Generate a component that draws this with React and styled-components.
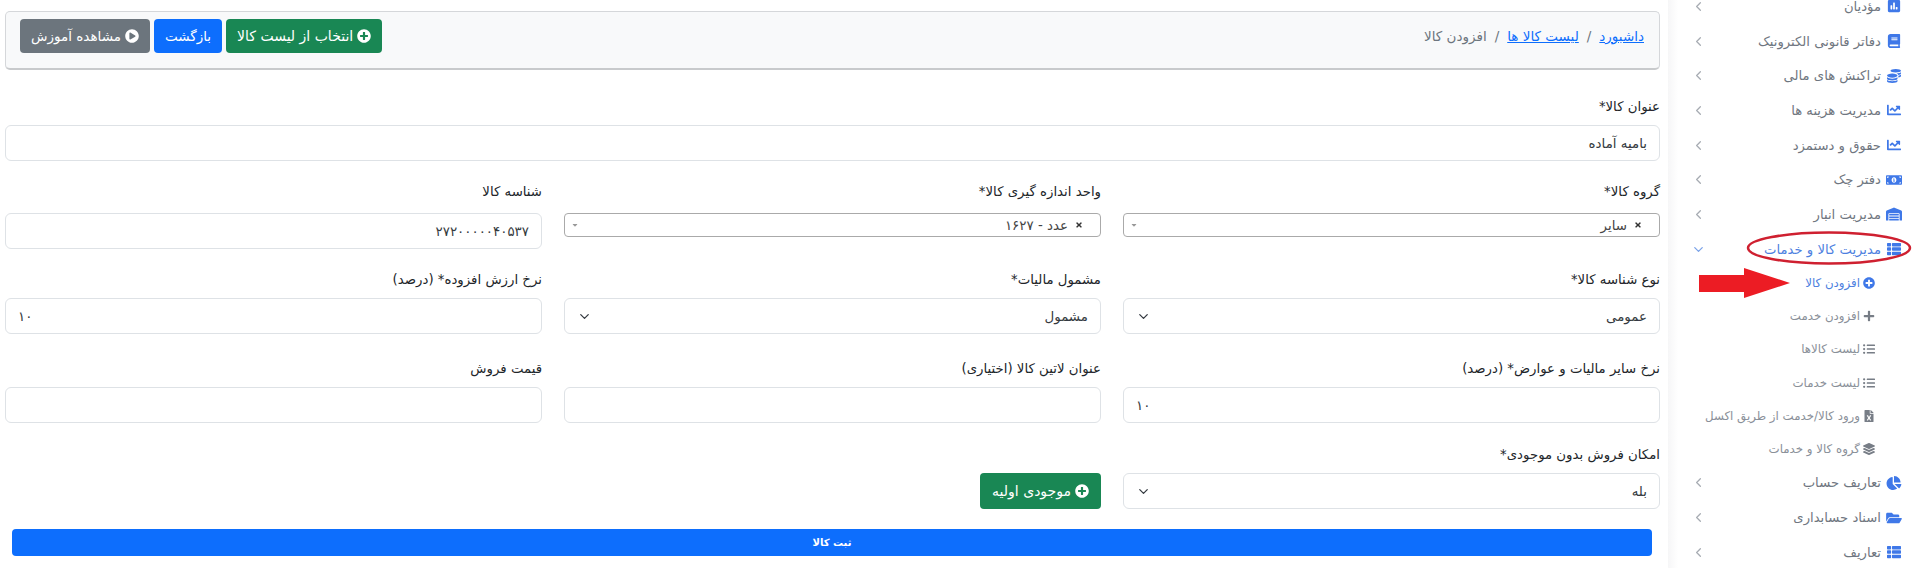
import React from "react";
import styled, { createGlobalStyle } from "styled-components";
import {
  FaPlusCircle, FaPlayCircle, FaPlus, FaListUl, FaFileExcel, FaLayerGroup, FaChartPie,
  FaFolderOpen, FaThList, FaChartLine, FaCoins, FaMoneyBillAlt, FaWarehouse, FaBook, FaPoll,
  FaTimes, FaCaretDown,
} from "react-icons/fa";
import { ChevronLeft, ChevronDown } from "lucide-react";

const Global = createGlobalStyle`
  html, body { margin: 0; padding: 0; background: #fff; }
  body { font-family: "DejaVu Sans", "Noto Sans", sans-serif; }
  * { box-sizing: border-box; }
`;

const Page = styled.div`
  position: relative;
  width: 1915px;
  height: 568px;
  overflow: hidden;
  display: flex;
  direction: ltr;
  background: #fff;
`;
const Main = styled.main`
  width: 1668px;
  flex: none;
  padding: 11px 8px 0 5px;
  direction: rtl;
  color: #212529;
`;
const Header = styled.header`
  height: 59px;
  border: 1px solid #d5d7da;
  border-bottom: 2px solid #c8cacc;
  border-radius: 5px;
  background: #f8f9fa;
  display: flex;
  justify-content: space-between;
  padding: 7px 15px 0 14px;
`;
const Crumbs = styled.nav`
  display: flex;
  align-items: center;
  height: 34px;
  gap: 8px;
  font-size: 13.5px;
  color: #6c757d;
`;
const CrumbLink = styled.a`
  color: #0d6efd;
  text-decoration: underline;
`;
const Actions = styled.div`
  display: flex;
  gap: 4px;
`;
const Button = styled.button`
  border: 0;
  border-radius: 4px;
  height: ${(p) => (p.$tall ? 36 : 34)}px;
  padding: 0 ${(p) => p.$pad ?? 11}px;
  background: ${(p) => p.$bg};
  color: #fff;
  font: 400 ${(p) => p.$size ?? 13.5}px "DejaVu Sans", sans-serif;
  direction: rtl;
  display: inline-flex;
  align-items: center;
  gap: 4px;
  svg { width: 14px; height: 14px; flex: none; }
`;
const Form = styled.form`
  display: flex;
  flex-direction: column;
`;
const Row = styled.div`
  display: grid;
  grid-template-columns: repeat(3, 537px);
  column-gap: 22px;
  margin-top: ${(p) => p.$top}px;
`;
const Field = styled.div`
  grid-column: ${(p) => (p.$full ? "1 / -1" : "auto")};
  display: flex;
  flex-direction: column;
  align-items: stretch;
`;
const Label = styled.label`
  height: 20px;
  margin-bottom: ${(p) => p.$gap ?? 8}px;
  font-size: 13.3px;
  line-height: 20px;
  color: #212529;
`;
const Input = styled.div`
  height: 36px;
  border: 1px solid #dee2e6;
  border-radius: 6px;
  background: #fff;
  padding: 0 12px;
  font-size: 13.4px;
  display: flex;
  align-items: center;
  justify-content: ${(p) => (p.$ltr ? "flex-end" : "flex-start")};
  color: #343a40;
`;
const SelectBox = styled(Input)`
  justify-content: space-between;
  svg { width: 15px; height: 15px; color: #343a40; }
`;
const Select2 = styled.div`
  height: 24px;
  border: 1px solid #aaa;
  border-radius: 4px;
  background: #fff;
  padding: 0 17px 0 6px;
  display: flex;
  align-items: center;
  justify-content: space-between;
  font-size: 13.4px;
  color: #444;
`;
const Tag = styled.span`
  display: inline-flex;
  align-items: center;
  gap: 7px;
  svg { width: 8px; height: 8px; color: #333; }
`;
const Caret = styled(FaCaretDown)`
  width: 8px;
  height: 8px;
  color: #999;
`;
const Submit = styled.button`
  margin: 20px 8px 0 7px;
  height: 27px;
  border: 0;
  border-radius: 4px;
  background: #0d6efd;
  color: #fff;
  font: 600 10px "DejaVu Sans", sans-serif;
`;
const Side = styled.aside`
  flex: 1;
  direction: rtl;
  background: linear-gradient(to right, #f6f6f7 0, #fff 10px);
  padding: 0 13px 0 10px;
`;
const Menu = styled.ul`
  list-style: none;
  margin: -11px 0 0;
  padding: 0;
`;
const Item = styled.li`
  height: 34.7px;
  display: flex;
  align-items: center;
  font-size: 13.2px;
  color: ${(p) => (p.$active ? "#4d7fe0" : "#6f7680")};
  svg.main { width: 16px; height: 14px; color: #3f78e8; margin-left: 5px; flex: none; }
`;
const Chev = styled.span`
  margin-right: auto;
  margin-left: 13px;
  display: inline-flex;
  svg { width: 15px; height: 15px; color: ${(p) => (p.$active ? "#7aa2e8" : "#a7acb3")}; }
`;
const SubMenu = styled.ul`
  list-style: none;
  margin: 0;
  padding: 0 27px 0 0;
`;
const SubItem = styled.li`
  height: 33.2px;
  display: flex;
  align-items: center;
  gap: 3px;
  font-size: 11.8px;
  color: ${(p) => (p.$active ? "#4d7fe0" : "#8a9099")};
  svg { width: 12px; height: 12px; flex: none; color: ${(p) => (p.$active ? "#3f78e8" : "#777d86")}; }
`;
const Mark = styled.svg`
  position: absolute;
  left: 0;
  top: 0;
  pointer-events: none;
`;

const items1 = [
  ["مؤدیان", FaPoll],
  ["دفاتر قانونی الکترونیک", FaBook],
  ["تراکنش های مالی", FaCoins],
  ["مدیریت هزینه ها", FaChartLine],
  ["حقوق و دستمزد", FaChartLine],
  ["دفتر چک", FaMoneyBillAlt],
  ["مدیریت انبار", FaWarehouse],
];
const subs = [
  ["افزودن کالا", FaPlusCircle, true],
  ["افزودن خدمت", FaPlus],
  ["لیست کالاها", FaListUl],
  ["لیست خدمات", FaListUl],
  ["ورود کالا/خدمت از طریق اکسل", FaFileExcel],
  ["گروه کالا و خدمات", FaLayerGroup],
];
const items2 = [
  ["تعاریف حساب", FaChartPie],
  ["اسناد حسابداری", FaFolderOpen],
  ["تعاریف", FaThList],
];

const MenuItem = ({ text, Icon, active }) => (
  <Item $active={active}>
    <Icon className="main" />
    <span>{text}</span>
    <Chev $active={active}>{active ? <ChevronDown /> : <ChevronLeft />}</Chev>
  </Item>
);

const Choice = ({ value }) => (
  <SelectBox>
    <span>{value}</span>
    <ChevronDown />
  </SelectBox>
);
const Picker = ({ value }) => (
  <Select2>
    <Tag><FaTimes />{value}</Tag>
    <Caret />
  </Select2>
);

export default function App() {
  return (
    <Page>
      <Global />
      <Main>
        <Header>
          <Crumbs>
            <CrumbLink>داشبورد</CrumbLink>
            <span>/</span>
            <CrumbLink>لیست کالا ها</CrumbLink>
            <span>/</span>
            <span>افزودن کالا</span>
          </Crumbs>
          <Actions>
            <Button $bg="#198754" $size={14}><FaPlusCircle />انتخاب از لیست کالا</Button>
            <Button $bg="#0d6efd" $pad={11}>بازگشت</Button>
            <Button $bg="#6c757d"><FaPlayCircle />مشاهده آموزش</Button>
          </Actions>
        </Header>
        <Form>
          <Row $top={27}>
            <Field $full>
              <Label>عنوان کالا*</Label>
              <Input>بامیه آماده</Input>
            </Field>
          </Row>
          <Row $top={21}>
            <Field><Label $gap={11}>گروه کالا*</Label><Picker value="سایر" /></Field>
            <Field><Label $gap={11}>واحد اندازه گیری کالا*</Label><Picker value="عدد - ۱۶۲۷" /></Field>
            <Field><Label $gap={11}>شناسه کالا</Label><Input>۲۷۲۰۰۰۰۰۴۰۵۳۷</Input></Field>
          </Row>
          <Row $top={21}>
            <Field><Label>نوع شناسه کالا*</Label><Choice value="عمومی" /></Field>
            <Field><Label>مشمول مالیات*</Label><Choice value="مشمول" /></Field>
            <Field><Label>نرخ ارزش افزوده* (درصد)</Label><Input $ltr>۱۰</Input></Field>
          </Row>
          <Row $top={25}>
            <Field><Label>نرخ سایر مالیات و عوارض* (درصد)</Label><Input $ltr>۱۰</Input></Field>
            <Field><Label>عنوان لاتین کالا (اختیاری)</Label><Input /></Field>
            <Field><Label>قیمت فروش</Label><Input /></Field>
          </Row>
          <Row $top={22}>
            <Field><Label>امکان فروش بدون موجودی*</Label><Choice value="بله" /></Field>
            <Field>
              <Label>&nbsp;</Label>
              <div><Button $bg="#198754" $tall $size={14} $pad={12}><FaPlusCircle />موجودی اولیه</Button></div>
            </Field>
          </Row>
          <Submit>ثبت کالا</Submit>
        </Form>
      </Main>
      <Side>
        <Menu>
          {items1.map(([t, I]) => <MenuItem key={t} text={t} Icon={I} />)}
          <MenuItem text="مدیریت کالا و خدمات" Icon={FaThList} active />
          <SubMenu>
            {subs.map(([t, I, a]) => (
              <SubItem key={t} $active={a}><I />{t}</SubItem>
            ))}
          </SubMenu>
          {items2.map(([t, I]) => <MenuItem key={t} text={t} Icon={I} />)}
        </Menu>
      </Side>
      <Mark width="1915" height="568" viewBox="0 0 1915 568">
        <ellipse cx="1829" cy="248" rx="81" ry="15.5" fill="none" stroke="#cf2030" strokeWidth="2.5" />
        <polygon points="1699,275 1744,275 1744,268 1790,283 1744,298 1744,292 1699,292" fill="#ec1c24" />
      </Mark>
    </Page>
  );
}
